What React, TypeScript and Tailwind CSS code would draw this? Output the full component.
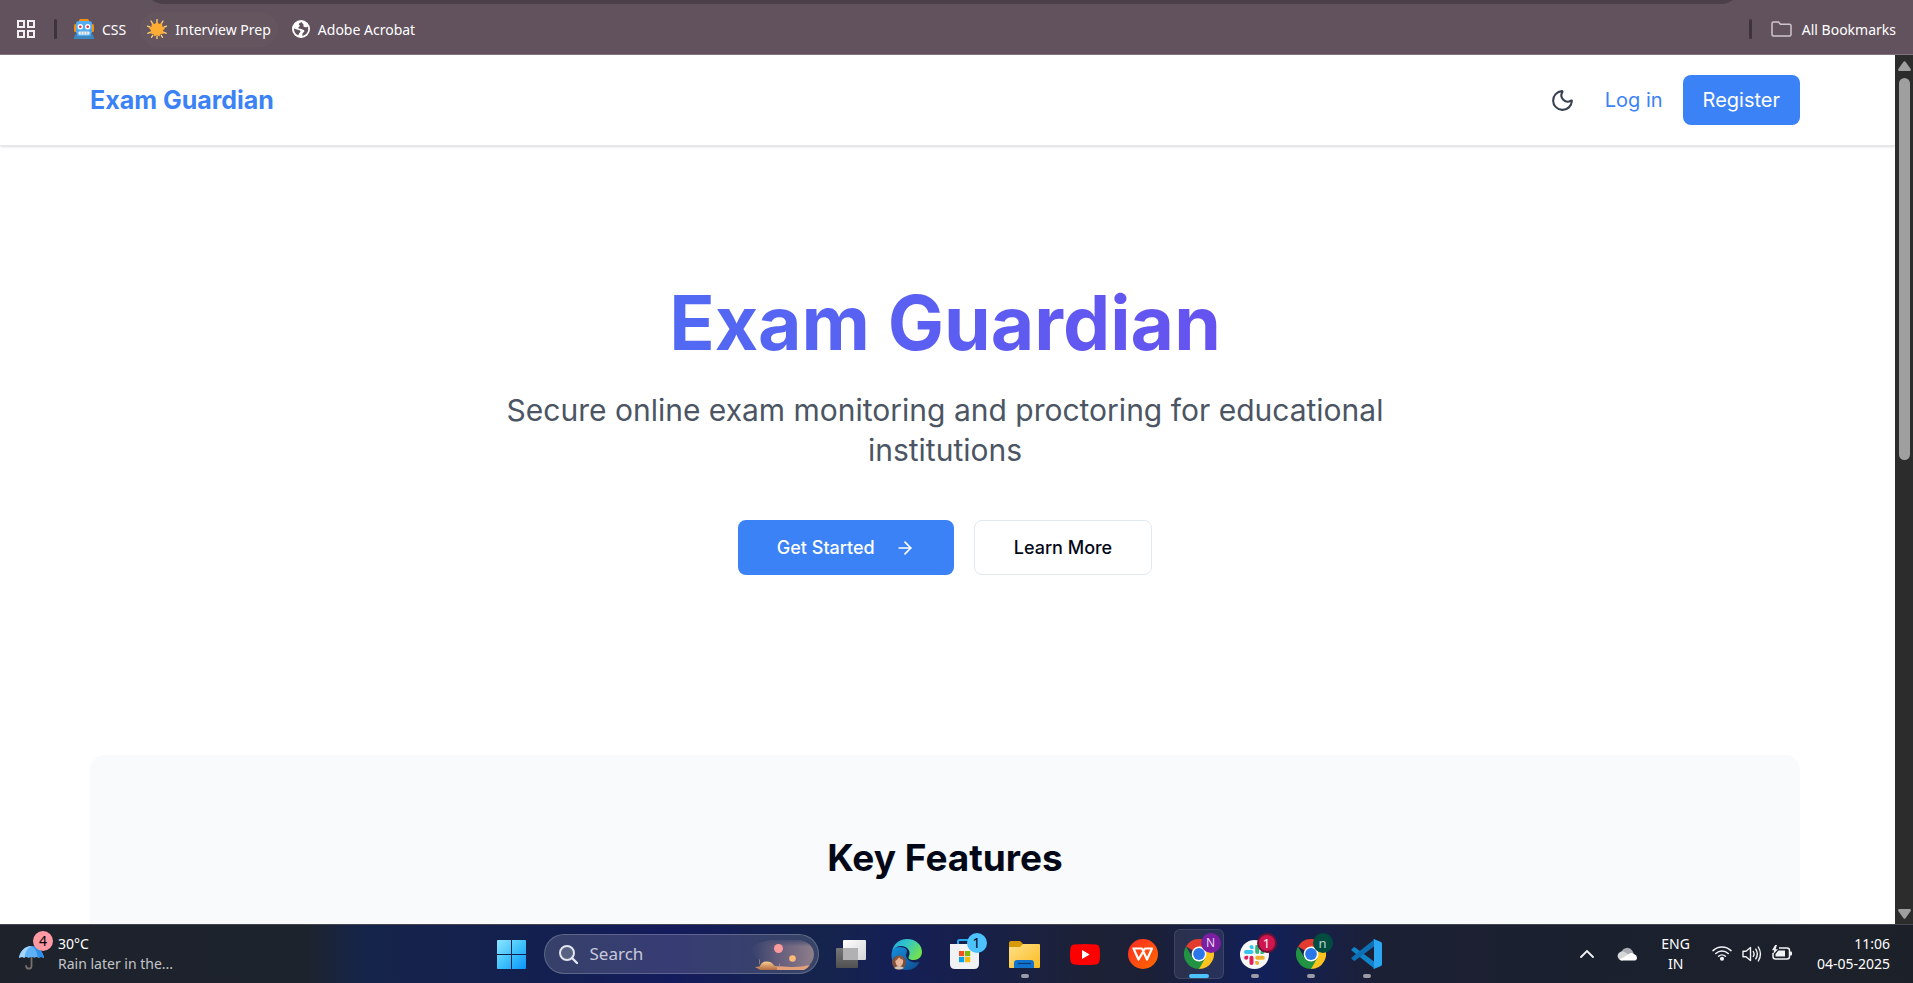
import React from "react";
import { ArrowRight, Moon } from "lucide-react";

/* ---------- bookmark bar icons ---------- */

function AppsGridIcon() {
  return (
    <svg className="size-[18px]" viewBox="0 0 18 18" fill="none" stroke="#f3eef1" strokeWidth="2">
      <rect x="1" y="1" width="6" height="6" />
      <rect x="11" y="1" width="6" height="6" />
      <rect x="1" y="11" width="6" height="6" />
      <rect x="11" y="11" width="6" height="6" />
    </svg>
  );
}

function RobotIcon() {
  return (
    <svg className="size-5" viewBox="0 0 20 20">
      <rect x="0" y="5" width="3" height="8" rx="1.5" fill="#f4900c" />
      <rect x="17" y="5" width="3" height="8" rx="1.5" fill="#f4900c" />
      <rect x="5" y="0" width="10" height="3" rx="1.5" fill="#f4900c" />
      <path d="M2 5Q2 2 5 2h10q3 0 3 3v9H2z" fill="#55acee" />
      <path d="M0 20q0-4 3-6V11h14v3q3 2 3 6z" fill="#3b88c3" />
      <rect x="3" y="11" width="14" height="6" rx="2" fill="#55acee" />
      <circle cx="6.3" cy="7.8" r="2.7" fill="#fff" />
      <circle cx="13.7" cy="7.8" r="2.7" fill="#fff" />
      <circle cx="6.3" cy="7.8" r="1.3" fill="#dd2e44" />
      <circle cx="13.7" cy="7.8" r="1.3" fill="#dd2e44" />
      <rect x="4.5" y="12.5" width="11" height="3.2" rx="1" fill="#e6f3fb" />
      <path d="M7.2 12.5v3.2M10 12.5v3.2M12.8 12.5v3.2" stroke="#8899a6" strokeWidth=".6" />
    </svg>
  );
}

function SunIcon() {
  return (
    <svg className="size-5" viewBox="0 0 20 20">
      <path
        d="M10 0v3M10 17v3M0 7.2l3 .8M17 8l3-.8M4 2l1.5 2.4M16 2l-1.5 2.4M.8 14.3l2.6-1.2M19.200 14.300l-2.600-1.200M4.500 18.300l1.200-2M15.500 18.300l-1.200-2"
        stroke="#ffd27a"
        strokeWidth="1.3"
        strokeLinecap="round"
      />
      <path
        d="M10 2.200l1.900 2.700 3.200-.8.2 3.300 2.700 1.800-2.100 2.400.9 3.200-3.300.3-1.200 2.400-2.300-1.600-2.500 1.600-1.100-2.600-3.200-.3.9-3-2.100-2.500 2.600-1.700.2-3.300 3.200.8z"
        fill="#ffac33"
      />
    </svg>
  );
}

function GlobeIcon() {
  return (
    <svg className="size-[18px]" viewBox="0 0 18 18">
      <circle cx="9" cy="9" r="9" fill="#fff" />
      <path
        d="M9.500 1.900c-.6.700-2.700 1-2.700 2.300 0 .8 1 .8 1 1.600 0 1-1.500 1-1.500 2 0 .9.900 1 2 1 1.800 0 1.500 1 2.800 1 1.200 0 1.200.8 1.200 1.500 0 1-1.900 1.200-1.900 2.800v1.800c3.500-.6 5.800-3.400 5.800-6.900 0-1-.2-1.800-.5-2.600-.8.900-2.900 1.200-3.900.4-.8-.7.100-1.400-.3-2.200-.3-.8-1.300-1.200-2-2.700z"
        fill="#62525d"
      />
      <path
        d="M2 8.300c1.500 1.400 2.700.7 3.800 1.500 1.300.9 2.700.2 2.700 1.500 0 1.500-1.500 1.400-1.700 2.700-.1.700-.2 1.200-.8 1.300C3.600 14.200 2 11.900 2 9z"
        fill="#62525d"
      />
    </svg>
  );
}

function FolderOutlineIcon() {
  return (
    <svg className="h-4 w-[21px]" viewBox="0 0 21 16" fill="none" stroke="#cfc6cc" strokeWidth="1.500">
      <path d="M1 2.500Q1 1 2.500 1h5l2 2.200h9Q20 3.200 20 4.700v8.800q0 1.500-1.500 1.500h-16Q1 15 1 13.500z" />
    </svg>
  );
}

/* ---------- taskbar icons ---------- */

function UmbrellaIcon() {
  return (
    <svg className="h-6 w-[26px]" viewBox="0 0 26 24">
      <path d="M12.500 9v11.500a2.700 2.700 0 0 1-5.300 0v-1.300" fill="none" stroke="#77706d" strokeWidth="1.800" />
      <path d="M0 12C1 5 6 0 12.500 0S24 5 25 12q-3-2-5 0-2-2-4.500-.2-3-1.800-6 .2-2.500-2-4.500 0-2-2-5 0z" fill="#5eb1f7" />
      <path d="M12.500 0C8 2 6 7 5.500 12q-2-2-5.500 0C1 5 6 0 12.500 0z" fill="#a4d4fb" />
      <path d="M12.500 0c4 2 6 7 6.300 12q2-2 6.200 0C24 5 19 0 12.500 0z" fill="#2f8fe8" />
    </svg>
  );
}

function WindowsIcon() {
  return (
    <svg className="size-[29px]" viewBox="0 0 29 29">
      <defs>
        <linearGradient id="win" x1="0" y1="0" x2="1" y2="1">
          <stop offset="0" stopColor="#8fe4ff" />
          <stop offset=".5" stopColor="#40c3fb" />
          <stop offset="1" stopColor="#0a93fb" />
        </linearGradient>
      </defs>
      <path d="M1 0h13v14H0V1q0-1 1-1zM15 0h13q1 0 1 1v13H15zM0 15h14v14H1q-1 0-1-1zM15 15h14v13q0 1-1 1H15z" fill="url(#win)" />
    </svg>
  );
}

function SearchIcon() {
  return (
    <svg className="size-[19px]" viewBox="0 0 19 19" fill="none" stroke="#e3e5ef">
      <circle cx="8" cy="8" r="7" strokeWidth="2" fill="#596180" />
      <path d="M13 13l5 5" strokeWidth="2.400" strokeLinecap="round" />
    </svg>
  );
}

function DesertScene() {
  return (
    <svg className="mr-1 h-8 w-[64px]" viewBox="0 0 64 32">
      <defs>
        <linearGradient id="haze" x1="0" y1="0" x2="1" y2="0">
          <stop offset="0" stopColor="#5b5878" stopOpacity="0" />
          <stop offset=".4" stopColor="#6d6280" stopOpacity=".8" />
          <stop offset="1" stopColor="#8f7f8b" />
        </linearGradient>
        <linearGradient id="hazeFade" x1="0" y1="0" x2="0" y2="1">
          <stop offset="0" stopColor="#454c72" stopOpacity=".95" />
          <stop offset=".45" stopColor="#454c72" stopOpacity="0" />
        </linearGradient>
        <linearGradient id="sand" x1="0" y1="0" x2="0" y2="1">
          <stop offset="0" stopColor="#fbd08f" />
          <stop offset="1" stopColor="#b06a42" />
        </linearGradient>
      </defs>
      <path d="M0 10Q10 3 24 2h24q15 2 16 14 0 8-8 14H14z" fill="url(#haze)" />
      <path d="M0 10Q10 3 24 2h24q15 2 16 14z" fill="url(#hazeFade)" />
      <circle cx="28.500" cy="10.500" r="4.500" fill="#fb9a9c" />
      <circle cx="42.500" cy="20.500" r="3.300" fill="#fdb978" />
      <path d="M14 29.500q14-2 24-.8 10 .8 22-1.700-2 3-6 5H14z" fill="#e3a07c" />
      <path d="M5 29l4.500-.6q2-5 7-5 5.500 0 7.500 4l3 1.100v3.500H10z" fill="url(#sand)" />
      <path d="M9.500 21.500v5M29.500 25.500v3.500" stroke="#a38c86" strokeWidth=".8" />
    </svg>
  );
}

function TaskViewIcon() {
  return (
    <svg className="size-[30px]" viewBox="0 0 30 30">
      <defs>
        <linearGradient id="tvLight" x1="0" y1="0" x2="1" y2="1">
          <stop offset="0" stopColor="#ffffff" />
          <stop offset="1" stopColor="#d4d4d6" />
        </linearGradient>
        <linearGradient id="tvDark" x1="0" y1="0" x2="0" y2="1">
          <stop offset="0" stopColor="#777" />
          <stop offset="1" stopColor="#505050" />
        </linearGradient>
      </defs>
      <rect x="0" y="9" width="22" height="20" rx="1" fill="url(#tvDark)" />
      <rect x="7" y="1" width="23" height="20" rx="1" fill="url(#tvLight)" />
      <path d="M7 9h15v12H8q-1 0-1-1z" fill="#b1b1b3" />
    </svg>
  );
}

function EdgeIcon() {
  return (
    <svg className="size-[31px]" viewBox="0 0 31 31">
      <defs>
        <linearGradient id="edgeTop" x1="0" y1="0" x2="1" y2=".5">
          <stop offset="0" stopColor="#1fa5dd" />
          <stop offset=".5" stopColor="#33c7c6" />
          <stop offset="1" stopColor="#6fe052" />
        </linearGradient>
        <linearGradient id="edgeLow" x1="0" y1="0" x2="1" y2="1">
          <stop offset="0" stopColor="#1590dd" />
          <stop offset="1" stopColor="#114a8b" />
        </linearGradient>
      </defs>
      <path d="M.5 15Q1 8 8 8c7 0 9 3 7.500 6-2 5 3 11 13 9q-4 8-12.500 8C6 31 0 25 .5 15z" fill="url(#edgeLow)" />
      <path d="M1 12C3 4 9 0 16 0c9 0 15 6 15 13 0 5-4 8-8 8-5 0-6.500-2-5-4 2-4-1-10-8-10-4 0-7 2-9 5z" fill="url(#edgeTop)" />
      <circle cx="8" cy="23.500" r="7" fill="#7a4f3d" />
      <ellipse cx="8.300" cy="22.500" rx="3.900" ry="4.800" fill="#e9b497" />
      <path d="M3 29q5-4 10 0-5 3-10 0z" fill="#d8c0b5" />
      <path d="M3.800 22q1-5 5-5 3.500 0 3.700 4-3-1-4.500-2.500Q6 21.500 3.800 22z" fill="#8c5a40" />
    </svg>
  );
}

function StoreIcon() {
  return (
    <svg className="h-[30px] w-[29px]" viewBox="0 0 29 30">
      <path d="M8 7V2.500Q8 1 9.500 1h10Q21 1 21 2.500V7" fill="none" stroke="#27a8ee" strokeWidth="2" />
      <path d="M0 5h29v20q0 5-5 5H5q-5 0-5-5z" fill="#f1f2f4" />
      <rect x="9" y="12" width="5.200" height="5.200" fill="#f25022" />
      <rect x="15" y="12" width="5.200" height="5.200" fill="#7fba00" />
      <rect x="9" y="18" width="5.200" height="5.200" fill="#00a4ef" />
      <rect x="15" y="18" width="5.200" height="5.200" fill="#ffb900" />
    </svg>
  );
}

function ExplorerIcon() {
  return (
    <svg className="h-[27px] w-[31px]" viewBox="0 0 31 27">
      <defs>
        <linearGradient id="folder" x1="0" y1="0" x2="1" y2="1">
          <stop offset="0" stopColor="#ffe08a" />
          <stop offset="1" stopColor="#fbbc1f" />
        </linearGradient>
      </defs>
      <path d="M0 2q0-2 2-2h8q1.500 0 2.500 1.300L14 3h15q2 0 2 2v6H0z" fill="#d99a09" />
      <path d="M0 7q0-1 1-1h10l3-3h16q1 0 1 1v22q0 1-1 1H1q-1 0-1-1z" fill="url(#folder)" />
      <path d="M5 27v-5q0-3 3-3h14q3 0 3 3v5z" fill="#1173cb" />
      <path d="M9 22.500h13" stroke="#0b3c78" strokeWidth="1.200" />
    </svg>
  );
}

function YouTubeIcon() {
  return (
    <svg className="h-[21px] w-[30px]" viewBox="0 0 30 21">
      <path d="M4 .6Q15-.6 26 .6q3 .4 3.500 3.400 1 6.500 0 13-.5 3-3.500 3.400-11 1.200-22 0Q1 20 .5 17q-1-6.500 0-13Q1 1 4 .6z" fill="#f00" />
      <path d="M12 6l7.700 4.500L12 15z" fill="#fff" />
    </svg>
  );
}

function WpsIcon() {
  return (
    <svg className="size-[30px]" viewBox="0 0 30 30">
      <defs>
        <linearGradient id="wps" x1="0" y1="0" x2="1" y2="1">
          <stop offset="0" stopColor="#ff2a22" />
          <stop offset="1" stopColor="#ff6a00" />
        </linearGradient>
      </defs>
      <circle cx="15" cy="15" r="15" fill="url(#wps)" />
      <path d="M5.500 9.500h8.500l5 11 5-11h-7l-6.500 11z" fill="none" stroke="#fff" strokeWidth="2.200" strokeLinejoin="round" />
    </svg>
  );
}

function ChromeIcon() {
  return (
    <svg className="size-[30px]" viewBox="0 0 30 30">
      <path d="M15 15L2 7.500A15 15 0 0 1 28 7.500z" fill="#e33b2e" />
      <path d="M15 15V7.500h13A15 15 0 0 1 15 30z" fill="#fcc31e" />
      <path d="M2 7.500L8.500 18.700 15 22.500l6.500-3.800L15 30A15 15 0 0 1 2 7.500z" fill="#229342" />
      <circle cx="15" cy="15" r="7.400" fill="#fff" />
      <circle cx="15" cy="15" r="5.900" fill="#2a77ea" />
    </svg>
  );
}

function SlackIcon() {
  return (
    <svg className="size-[29px]" viewBox="0 0 29 29">
      <circle cx="14.500" cy="14.500" r="14.500" fill="#f8f8f9" />
      <rect x="4" y="10" width="9.500" height="4" rx="2" fill="#36c5f0" />
      <path d="M13.500 9h-2a2 2 0 1 1 2-2z" fill="#36c5f0" />
      <rect x="15.200" y="4.800" width="4" height="9.300" rx="2" fill="#2eb67d" />
      <path d="M20.500 14v-2a2 2 0 1 1 2 2z" fill="#2eb67d" />
      <rect x="15.200" y="15.700" width="9.600" height="4" rx="2" fill="#ecb22e" />
      <path d="M15.200 21h2a2 2 0 1 1-2 2z" fill="#ecb22e" />
      <rect x="9.500" y="15.700" width="4" height="9.300" rx="2" fill="#e01e5a" />
      <path d="M8.200 15.700v2a2 2 0 1 1-2-2z" fill="#e01e5a" />
    </svg>
  );
}

function VsCodeIcon() {
  return (
    <svg className="h-[30px] w-[31px]" viewBox="0 0 31 30">
      <path d="M.6 10.200l2-1.800q.8-.6 1.600 0L24 23.300V29.300q-1.200 0-2-.8L.6 11.600q-.6-.7 0-1.400z" fill="#1183c9" />
      <path d="M.6 19.800l2 1.800q.8.600 1.600 0L24 6.700V.6q-1.200 0-2 .9L.6 18.400q-.6.700 0 1.400z" fill="#0d70b5" />
      <path d="M22.200.2q.5-.3 1.200 0l6.600 2.900q1 .5 1 1.600v20.600q0 1.100-1 1.600l-6.600 2.900q-.7.300-1.200 0 .8-.4.800-1.600V1.800q0-1.200-.8-1.600z" fill="#2ba6f3" />
    </svg>
  );
}

function CloudIcon() {
  return (
    <svg className="h-3.5 w-5" viewBox="0 0 20 14">
      <path d="M4.500 5a6 6 0 0 1 10.700-1.500Q17 6 16.500 8L5 10z" fill="#a9acb0" />
      <path d="M5 13.500a4.600 4.600 0 1 1 2.500-8.600L15 9z" fill="#d4d6d8" />
      <path d="M2.500 12.500l9-5Q14 5 17 7q3 1.200 3 3.700 0 2.800-3 2.800H5q-1.500 0-2.500-1z" fill="#fff" />
    </svg>
  );
}

function WifiIcon() {
  return (
    <svg className="h-4 w-5" viewBox="0 0 20 16" fill="none" stroke="#f2f3f4" strokeWidth="1.500" strokeLinecap="round">
      <path d="M1 5.600a13 13 0 0 1 18 0M3.800 8.500a9 9 0 0 1 12.400 0M6.600 11.300a5 5 0 0 1 6.800 0" />
      <circle cx="10" cy="13.700" r="1.300" fill="#f2f3f4" />
    </svg>
  );
}

function VolumeIcon() {
  return (
    <svg className="h-[18px] w-5" viewBox="0 0 20 18" fill="none" stroke="#f2f3f4" strokeWidth="1.400" strokeLinecap="round" strokeLinejoin="round">
      <path d="M1 6.200h3L8.500 2.500v13L4 11.800H1z" />
      <path d="M11.300 6.500q1.500 2.500 0 5M13.800 4.200q3 4.800 0 9.600M16.300 2q4.300 7 0 14" />
    </svg>
  );
}

function BatteryIcon() {
  return (
    <svg className="h-4 w-5" viewBox="0 0 20 16">
      <path d="M7 3h8q2.500 0 2.500 2.500v6Q17.500 14 15 14H3.500Q1 14 1 11.500V8" fill="none" stroke="#f2f3f4" strokeWidth="1.500" />
      <path d="M18 6.500h1q1 0 1 1v2q0 1-1 1h-1z" fill="#f2f3f4" />
      <path d="M6.500 5.500H13v6H3.500V9z" fill="#f2f3f4" />
      <path d="M3.200 0L0 5.300h2.200L1 9.500l5-5.200H3.600L5 0z" fill="#f2f3f4" />
    </svg>
  );
}

/* ---------- browser chrome ---------- */

function Bookmark({ icon, label, active }: { icon: React.ReactNode; label: string; active?: boolean }) {
  return (
    <a href="#" className={`flex h-[35px] items-center gap-2 rounded-full px-[7px] ${active ? "bg-[#65555f]" : ""}`}>
      {icon}
      <span>{label}</span>
    </a>
  );
}

function BookmarksBar() {
  return (
    <div className="shrink-0 border-b border-[#817480] bg-[#62525d]">
      <div className="h-1 overflow-hidden">
        <div className="-mt-9 mr-[172px] ml-[144px] h-10 rounded-full bg-[#4b4049]" />
      </div>
      <nav aria-label="Bookmarks" className="flex h-[50px] items-center gap-[7px] px-[17px] font-['Noto_Sans','Noto_Sans_CJK_SC',sans-serif] text-[14px] text-white">
        <button type="button" aria-label="Apps">
          <AppsGridIcon />
        </button>
        <span className="mr-[3px] ml-3 h-5 w-[3px] rounded-full bg-[#3f333b]" />
        <Bookmark icon={<RobotIcon />} label="CSS" />
        <Bookmark icon={<SunIcon />} label="Interview Prep" active />
        <Bookmark icon={<GlobeIcon />} label="Adobe Acrobat" />
        <span className="mr-3 ml-auto h-5 w-[3px] rounded-full bg-[#3f333b]" />
        <button type="button" className="flex items-center gap-[10px]">
          <FolderOutlineIcon />
          All Bookmarks
        </button>
      </nav>
    </div>
  );
}

function Scrollbar() {
  return (
    <div className="flex w-[18px] shrink-0 flex-col items-center bg-[#2c2c2c] pt-[6px] pb-[5px]">
      <svg className="h-[10px] w-[13px] shrink-0" viewBox="0 0 13 10">
        <path d="M5.500.8q1-1.200 2 0l5.200 7.200q.6 2-1 2H1.300q-1.600 0-1-2z" fill="#9f9f9f" />
      </svg>
      <div className="mt-[7px] w-[11px] flex-1">
        <div className="h-[46%] rounded-full bg-[#9f9f9f]" />
      </div>
      <svg className="h-[10px] w-[13px] shrink-0" viewBox="0 0 13 10">
        <path d="M5.500 9.200q1 1.200 2 0l5.200-7.200q.6-2-1-2H1.300Q-.3 0 .3 2z" fill="#9f9f9f" />
      </svg>
    </div>
  );
}

/* ---------- site ---------- */

function SiteHeader() {
  return (
    <header className="border-b border-[#e5e7eb] bg-white pr-[5px] shadow-sm">
      <div className="mx-auto flex max-w-[1750px] items-center justify-between px-5 py-5">
        <a href="#" className="text-[25px] leading-[35px] font-bold text-[#3b82f6]">
          Exam Guardian
        </a>
        <div className="flex items-center text-[20px] leading-[30px]">
          <button type="button" aria-label="Toggle dark mode" className="mr-5 p-[10px] text-[#374151]">
            <Moon className="size-[25px]" strokeWidth={2} />
          </button>
          <a href="#" className="mr-5 text-[#3b82f6]">
            Log in
          </a>
          <a href="#" className="rounded-[8px] bg-[#3b82f6] px-5 py-[10px] text-white">
            Register
          </a>
        </div>
      </div>
    </header>
  );
}

function LandingPage() {
  return (
    <main className="mx-auto w-full max-w-[1750px] px-5">
      <section className="pt-[139px] pb-[180px] text-center">
        <h1 className="mb-[30px] bg-[linear-gradient(90deg,#3b82f6,#7c3aed)] bg-clip-text text-[75px] leading-[75px] font-bold text-transparent">
          Exam Guardian
        </h1>
        <p className="mx-auto mb-[50px] max-w-[960px] text-[30px] leading-[40px] text-[#4b5563]">
          Secure online exam monitoring and proctoring for educational institutions
        </p>
        <div className="flex justify-center gap-5 text-[18px] leading-[25px] font-medium">
          <button type="button" className="flex h-[55px] items-center gap-5 rounded-[8px] bg-[#3b82f6] px-[39px] text-white">
            Get Started
            <ArrowRight className="size-5" />
          </button>
          <button type="button" className="flex h-[55px] items-center rounded-[8px] border border-[#e2e8f0] bg-white px-[39px] text-[#020817]">
            Learn More
          </button>
        </div>
      </section>
      <section className="rounded-[15px] bg-[#f9fafc] px-5 py-20 text-center">
        <h2 className="text-[37px] leading-[45px] font-bold text-[#020817]">Key Features</h2>
        <div className="h-40" />
      </section>
    </main>
  );
}

/* ---------- taskbar ---------- */

type SlotProps = {
  label: string;
  children: React.ReactNode;
  wide?: boolean;
  active?: boolean;
  running?: boolean;
  badge?: string;
  badgeClass?: string;
};

function Slot({ label, children, wide, active, running, badge, badgeClass }: SlotProps) {
  return (
    <div className={`flex justify-center ${wide ? "w-[60px]" : "w-14"}`}>
      <button
        type="button"
        aria-label={label}
        className={`relative flex size-[50px] items-center justify-center rounded-[6px] border ${active ? "border-white/10 bg-white/8" : "border-transparent"}`}
      >
        {children}
        {badge && (
          <span className={`absolute top-[3px] right-[2px] flex size-5 items-center justify-center rounded-full leading-none ${badgeClass}`}>
            {badge}
          </span>
        )}
        {(active || running) && (
          <span className={`absolute bottom-0 h-1 rounded-full ${active ? "w-5 bg-[#4cc2ff]" : "w-2 bg-[#9a9ba6]"}`} />
        )}
      </button>
    </div>
  );
}

function Taskbar() {
  return (
    <footer className="flex h-[59px] shrink-0 items-center border-t border-[#43464e] bg-[linear-gradient(90deg,#1d222b_0%,#1d232d_16%,#15244a_19%,#13204f_28%,#141b5c_35%,#15244c_43%,#141f56_47%,#1d2136_57%,#1b2036_60%,#12205a_66%,#1c2035_72%,#1b2030_80%,#1c2129_100%)] font-['Noto_Sans','Noto_Sans_CJK_SC',sans-serif] text-[14px] leading-5 text-white">
      <div className="flex flex-1 items-center pl-[19px]">
        <div className="relative w-[39px] pt-[7px]">
          <UmbrellaIcon />
          <span className="absolute -top-2 left-[14px] flex size-5 items-center justify-center rounded-full bg-[#ff99a4] text-[14px] text-black">
            4
          </span>
        </div>
        <div>
          <p>30°C</p>
          <p className="text-[#c3c5c9]">Rain later in the...</p>
        </div>
      </div>

      <div className="mr-[31px] flex items-center">
        <Slot label="Start">
          <WindowsIcon />
        </Slot>
        <label className="mx-1 flex h-10 w-[275px] items-center rounded-full border border-white/20 bg-white/15 pl-[14px]">
          <SearchIcon />
          <input
            type="text"
            aria-label="Search"
            placeholder="Search"
            className="ml-3 min-w-0 flex-1 bg-transparent text-[17px] text-white outline-none placeholder:text-[#c7cadb]"
          />
          <DesertScene />
        </label>
        <Slot label="Task view">
          <TaskViewIcon />
        </Slot>
        <Slot label="Edge">
          <EdgeIcon />
        </Slot>
        <Slot label="Microsoft Store" wide badge="1" badgeClass="bg-[#4cc2ff] text-[14px] text-black">
          <StoreIcon />
        </Slot>
        <Slot label="File Explorer" wide running>
          <ExplorerIcon />
        </Slot>
        <Slot label="YouTube" wide>
          <YouTubeIcon />
        </Slot>
        <Slot label="WPS Office">
          <WpsIcon />
        </Slot>
        <Slot label="Chrome" active badge="N" badgeClass="bg-[#7b1fa2] text-[12px] text-[#e9d3f3]">
          <ChromeIcon />
        </Slot>
        <Slot label="Slack" running badge="1" badgeClass="border-2 border-[#6d1235] bg-[#cf1650] text-[13px] text-white">
          <SlackIcon />
        </Slot>
        <Slot label="Chrome profile" running badge="n" badgeClass="bg-[#004d40] text-[13px] text-[#b9d3ce]">
          <ChromeIcon />
        </Slot>
        <Slot label="Visual Studio Code" running>
          <VsCodeIcon />
        </Slot>
      </div>

      <div className="flex flex-1 items-center justify-end pr-[23px]">
        <svg className="mr-[23px] h-2 w-[14px]" viewBox="0 0 14 8" fill="none" stroke="#f2f3f4" strokeWidth="1.800" strokeLinecap="round">
          <path d="M1 7l6-6 6 6" />
        </svg>
        <CloudIcon />
        <div className="mr-[22px] ml-6 text-center">
          <p>ENG</p>
          <p>IN</p>
        </div>
        <div className="flex gap-[10px]">
          <WifiIcon />
          <VolumeIcon />
          <BatteryIcon />
        </div>
        <div className="ml-[25px] text-right">
          <p>11:06</p>
          <p>04-05-2025</p>
        </div>
      </div>
    </footer>
  );
}

export default function App() {
  return (
    <div className="flex h-screen flex-col overflow-hidden bg-white">
      <BookmarksBar />
      <div className="flex min-h-0 flex-1">
        <div className="min-w-0 flex-1 overflow-hidden bg-white font-['Inter',sans-serif]">
          <SiteHeader />
          <div className="pr-[5px]">
            <LandingPage />
          </div>
        </div>
        <Scrollbar />
      </div>
      <Taskbar />
    </div>
  );
}
